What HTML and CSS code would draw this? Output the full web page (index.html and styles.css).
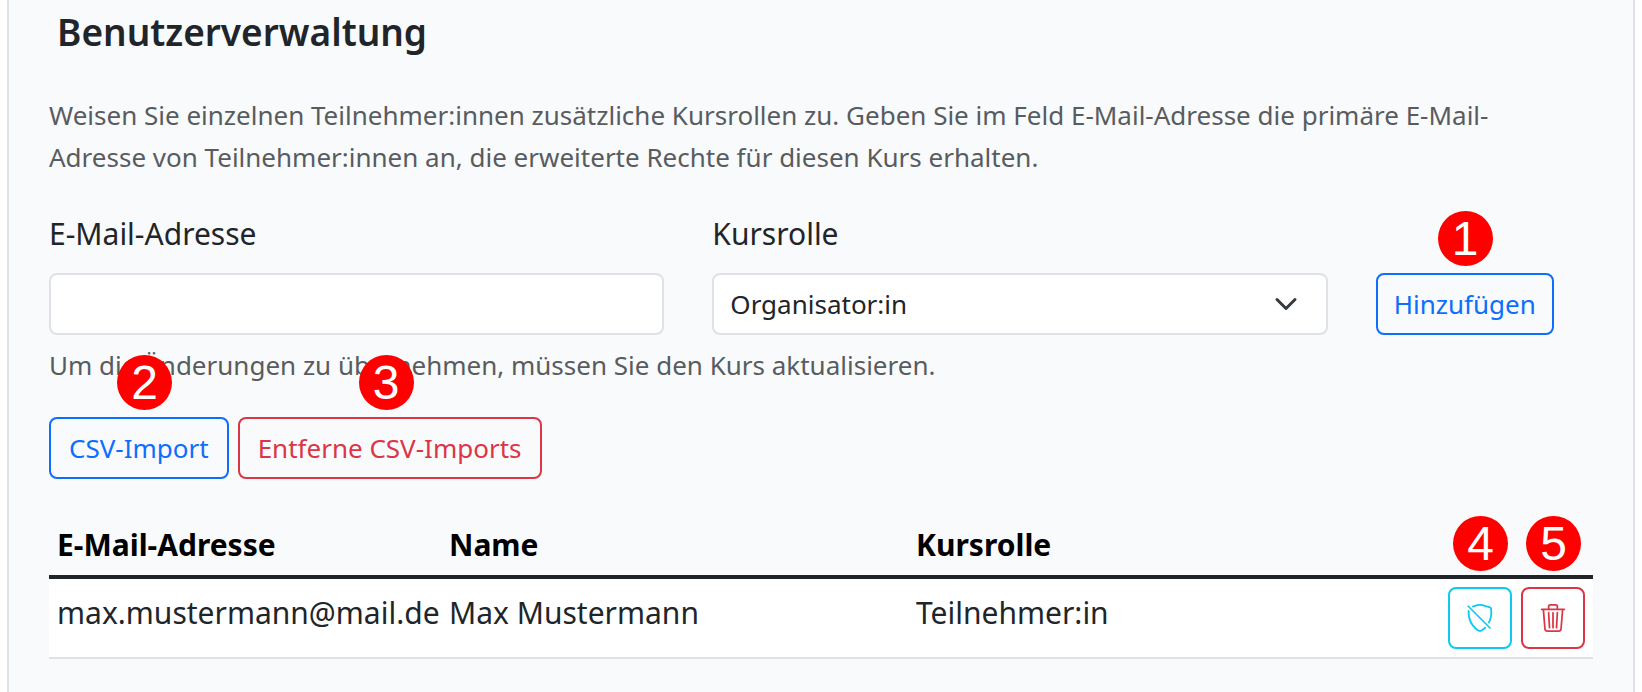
FILE: index.html
```html
<!DOCTYPE html>
<html lang="de">
<head>
<meta charset="utf-8">
<meta name="viewport" content="width=device-width, initial-scale=1">
<title>Benutzerverwaltung</title>
<link rel="stylesheet" href="styles.css">
</head>
<body>
<main class="panel">
  <h1 class="title">Benutzerverwaltung</h1>
  <p class="hint intro">Weisen Sie einzelnen Teilnehmer:innen zusätzliche Kursrollen zu. Geben Sie im Feld E-Mail-Adresse die primäre E-Mail-Adresse von Teilnehmer:innen an, die erweiterte Rechte für diesen Kurs erhalten.</p>

  <form class="role-form">
    <div class="field">
      <label for="email">E-Mail-Adresse</label>
      <input class="control" id="email" type="email">
    </div>
    <div class="field">
      <label for="role">Kursrolle</label>
      <div class="select-wrap">
        <select class="control" id="role">
          <option>Organisator:in</option>
          <option>Teilnehmer:in</option>
        </select>
        <svg class="chevron" viewBox="0 0 16 16" aria-hidden="true"><path d="m2 5 6 6 6-6"/></svg>
      </div>
    </div>
    <div class="marked">
      <button class="btn btn-primary" type="button">Hinzufügen</button>
      <span class="marker">1</span>
    </div>
  </form>
  <p class="hint">Um die Änderungen zu übernehmen, müssen Sie den Kurs aktualisieren.</p>

  <div class="actions">
    <div class="marked">
      <button class="btn btn-primary" type="button">CSV-Import</button>
      <span class="marker marker-import">2</span>
    </div>
    <div class="marked">
      <button class="btn btn-danger" type="button">Entferne CSV-Imports</button>
      <span class="marker marker-remove">3</span>
    </div>
  </div>

  <table class="users">
    <colgroup>
      <col class="col-email"><col class="col-name"><col class="col-role"><col class="col-tools">
    </colgroup>
    <thead>
      <tr><th scope="col">E-Mail-Adresse</th><th scope="col">Name</th><th scope="col">Kursrolle</th><td></td></tr>
    </thead>
    <tbody>
      <tr>
        <td>max.mustermann@mail.de</td>
        <td>Max Mustermann</td>
        <td>Teilnehmer:in</td>
        <td class="tools-cell">
          <div class="tools">
            <div class="marked">
              <button class="btn btn-info" type="button" aria-label="Rolle entziehen">
                <svg class="icon" viewBox="0 0 16 16" aria-hidden="true"><path fill-rule="evenodd" d="M1.093 3.093c-.465 4.275.885 7.46 2.513 9.589a11.8 11.8 0 0 0 2.517 2.453c.386.273.744.482 1.048.625.28.132.581.24.829.24s.548-.108.829-.24a7 7 0 0 0 1.048-.625 11.3 11.3 0 0 0 1.733-1.525l-.745-.745a10.3 10.3 0 0 1-1.578 1.392c-.346.244-.652.42-.893.533q-.18.085-.293.118a1 1 0 0 1-.101.025 1 1 0 0 1-.1-.025 2 2 0 0 1-.294-.118 6 6 0 0 1-.893-.533 10.7 10.7 0 0 1-2.287-2.233C3.053 10.228 1.879 7.594 2.06 4.06zM3.98 1.98l-.852-.852A59 59 0 0 1 5.072.559C6.157.266 7.31 0 8 0s1.843.265 2.928.56c1.11.3 2.229.655 2.887.87a1.54 1.54 0 0 1 1.044 1.262c.483 3.626-.332 6.491-1.551 8.616l-.77-.77c1.042-1.915 1.72-4.469 1.29-7.702a.48.48 0 0 0-.33-.39c-.65-.213-1.75-.56-2.836-.855C9.552 1.29 8.531 1.067 8 1.067c-.53 0-1.552.223-2.662.524A50 50 0 0 0 3.98 1.98m9.666 12.374-13-13 .708-.708 13 13z"/></svg>
              </button>
              <span class="marker marker-row">4</span>
            </div>
            <div class="marked">
              <button class="btn btn-danger" type="button" aria-label="Löschen">
                <svg class="icon" viewBox="0 0 16 16" aria-hidden="true"><path d="M6.5 1h3a.5.5 0 0 1 .5.5v1H6v-1a.5.5 0 0 1 .5-.5M11 2.5v-1A1.5 1.5 0 0 0 9.5 0h-3A1.5 1.5 0 0 0 5 1.5v1H1.5a.5.5 0 0 0 0 1h.538l.853 10.66A2 2 0 0 0 4.885 16h6.23a2 2 0 0 0 1.994-1.84l.853-10.66h.538a.5.5 0 0 0 0-1zm1.958 1-.846 10.58a1 1 0 0 1-.997.92h-6.23a1 1 0 0 1-.997-.92L3.042 3.5zm-7.487 1a.5.5 0 0 1 .528.47l.5 8.5a.5.5 0 0 1-.998.06L5 5.03a.5.5 0 0 1 .47-.53Zm5.058 0a.5.5 0 0 1 .47.53l-.5 8.5a.5.5 0 1 1-.998-.06l.5-8.5a.5.5 0 0 1 .528-.47M8 4.5a.5.5 0 0 1 .5.5v8.5a.5.5 0 0 1-1 0V5a.5.5 0 0 1 .5-.5"/></svg>
              </button>
              <span class="marker marker-row">5</span>
            </div>
          </div>
        </td>
      </tr>
    </tbody>
  </table>
</main>
</body>
</html>
```
FILE: styles.css
```css
* {
  box-sizing: border-box;
}

body {
  margin: 0;
  padding: 0 7px;
  background: #fff;
  color: #212529;
  font: 30px/48px "Noto Sans", "Open Sans", sans-serif;
}

.panel {
  min-height: 100vh;
  padding: 8px 40px 32px;
  border: solid #dee2e6;
  border-width: 0 2px;
  background: #f8fafc;
}

.title {
  margin: 0 0 38px;
  padding: 0 8px;
  font-size: 37px;
  line-height: 48px;
  font-weight: 600;
}

.hint {
  margin: 0;
  color: #595c5f;
  font-size: 26px;
  line-height: 42px;
}

.intro {
  margin-bottom: 32px;
  padding-right: 16px;
}

.role-form {
  display: grid;
  grid-template-columns: repeat(2, calc((100% + 48px) * 5 / 12 - 48px)) auto;
  justify-content: start;
  align-items: end;
  gap: 48px;
  margin-bottom: 9px;
}

.field {
  display: grid;
  gap: 15px;
}

.control {
  display: block;
  width: 100%;
  height: 62px;
  margin: 0;
  padding: 0 16px;
  border: 2px solid #dee2e6;
  border-radius: 8px;
  background: #fff;
  color: #212529;
  font: inherit;
  font-size: 26px;
  appearance: none;
}

.select-wrap {
  position: relative;
}

.chevron {
  position: absolute;
  top: 19px;
  right: 30px;
  width: 24px;
  height: 24px;
  fill: none;
  stroke: #343a40;
  stroke-width: 2;
  stroke-linecap: round;
  stroke-linejoin: round;
  pointer-events: none;
}

.btn {
  display: flex;
  align-items: center;
  height: 62px;
  margin: 0;
  padding: 0 16px;
  border: 2px solid currentColor;
  border-radius: 8px;
  background: transparent;
  font: inherit;
  font-size: 26px;
  white-space: nowrap;
}

.btn-primary {
  color: #0d6efd;
}

.btn-danger {
  color: #dc3545;
}

.btn-info {
  color: #0dcaf0;
}

.icon {
  width: 28px;
  height: 28px;
  fill: currentColor;
}

.marked {
  position: relative;
}

.marker {
  position: absolute;
  bottom: calc(100% + 7px);
  left: 50%;
  width: 55px;
  height: 55px;
  margin-left: -27px;
  border-radius: 50%;
  background: #f00;
  color: #fff;
  font: 48px/55px "Liberation Sans", Arial, sans-serif;
  text-align: center;
}

.marker-import {
  left: 95px;
}

.marker-remove {
  left: 148px;
}

.marker-row {
  bottom: calc(100% + 16px);
}

.actions {
  display: flex;
  gap: 9px;
  margin: 31px 0 32px;
}

.actions .btn {
  padding: 0 18px;
}

.users {
  width: 100%;
  border-collapse: separate;
  border-spacing: 0;
  table-layout: fixed;
}

.col-email {
  width: 392px;
}

.col-name {
  width: 467px;
}

.col-tools {
  width: 153px;
}

.users th,
.users td {
  padding: 10px 8px 6px;
  text-align: left;
  vertical-align: top;
}

.users .tools-cell {
  padding: 8px;
}

.users th {
  color: #000;
  font-weight: 700;
}

.users thead th,
.users thead td {
  border-bottom: 4px solid #212529;
}

.users tbody td {
  border-bottom: 2px solid #dee2e6;
  background: #fff;
}

.tools {
  display: flex;
  justify-content: flex-end;
  gap: 9px;
}
```
